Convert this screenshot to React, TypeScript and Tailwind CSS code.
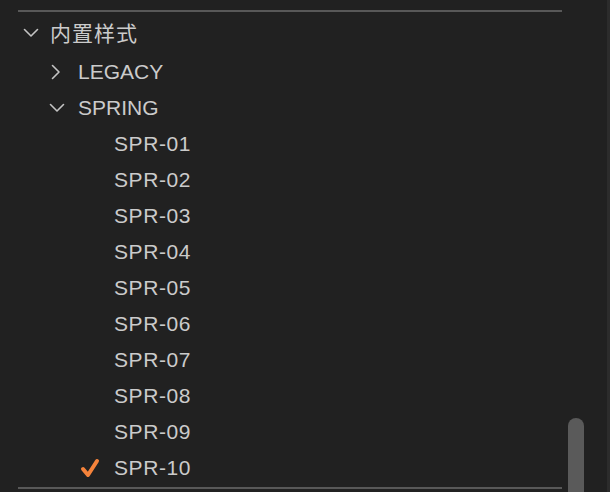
import * as React from 'react';

const items = ['SPR-01', 'SPR-02', 'SPR-03', 'SPR-04', 'SPR-05', 'SPR-06', 'SPR-07', 'SPR-08', 'SPR-09', 'SPR-10'];

function ChevronDown({ className }: { className?: string }) {
  return (
    <svg className={className} width="16" height="10" viewBox="0 0 16 10" fill="none">
      <path d="M1.5 1.5 L8 8 L14.5 1.5" stroke="#c4c4c4" strokeWidth="1.6" strokeLinecap="round" strokeLinejoin="round" />
    </svg>
  );
}

function ChevronRight({ className }: { className?: string }) {
  return (
    <svg className={className} width="10" height="16" viewBox="0 0 10 16" fill="none">
      <path d="M1.5 1.5 L8 8 L1.5 14.5" stroke="#c4c4c4" strokeWidth="1.6" strokeLinecap="round" strokeLinejoin="round" />
    </svg>
  );
}

function Check() {
  return (
    <svg width="20" height="20" viewBox="0 0 20 20" fill="none">
      <path d="M3 11 L8 17 L17 3" stroke="#f5833b" strokeWidth="4" strokeLinecap="round" strokeLinejoin="round" />
    </svg>
  );
}

export default function App() {
  return (
    <div
      className="relative h-[492px] w-[610px] overflow-hidden border-r-[3px] border-[#2c2c2c] bg-[#212121] text-[21px] text-[#cbcbcb]"
      style={{ fontFamily: '"Liberation Sans", "Noto Sans CJK SC", sans-serif' }}
    >
      <div className="h-[10px]" />
      <div className="ml-[18px] h-[2px] w-[544px] bg-[#585858]" />

      <div className="mt-[3px] flex h-[36px] items-center">
        <ChevronDown className="ml-[23px]" />
        <span className="ml-[11px] tracking-[1px]" style={{ fontFamily: '"Noto Sans CJK SC", sans-serif' }}>
          内置样式
        </span>
      </div>

      <div className="mt-[3px] flex h-[36px] items-center">
        <ChevronRight className="ml-[51px]" />
        <span className="ml-[17px]">LEGACY</span>
      </div>

      <div className="flex h-[36px] items-center">
        <ChevronDown className="ml-[49px]" />
        <span className="ml-[13px]">SPRING</span>
      </div>

      {items.map((name, i) => (
        <div key={name} className="flex h-[36px] items-center">
          <div className="ml-[80px] flex w-[34px] items-center">{i === items.length - 1 ? <Check /> : null}</div>
          <span className="tracking-[0.6px]">{name}</span>
        </div>
      ))}

      <div className="ml-[18px] mt-[1px] h-[2px] w-[544px] bg-[#585858]" />

      <div className="absolute left-[568px] top-[418px] h-[90px] w-[16px] rounded-t-full bg-[#5a5a5a]" />
    </div>
  );
}
